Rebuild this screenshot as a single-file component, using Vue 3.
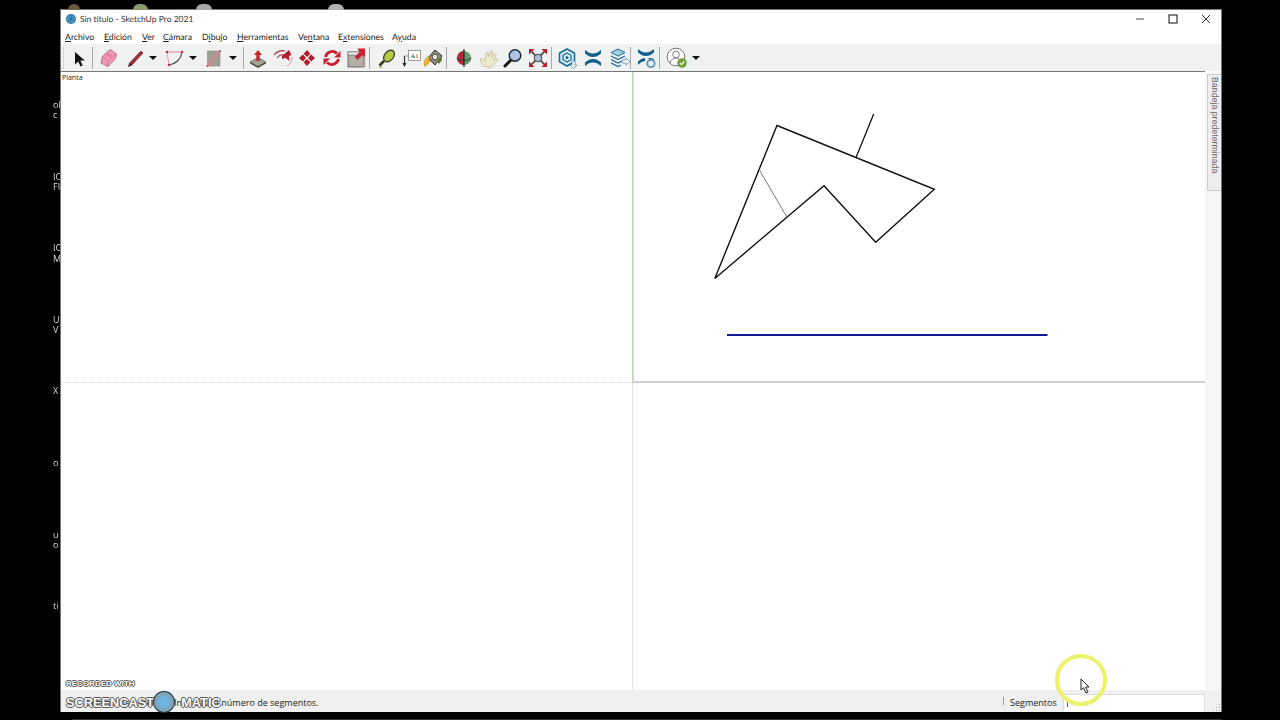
<template>
  <div class="stage">
    <!-- restos del escritorio detrás de la ventana -->
    <div class="desk-icon one"></div>
    <div class="desk-icon two"></div>
    <div class="desk-icon three"></div>
    <div class="desk-icon four"></div>
    <span v-for="l in deskLabels" :key="l.y" class="desk-label" :style="{ top: l.y + 'px' }">{{ l.t }}</span>

    <div class="window">
      <div class="titlebar">
        <svg class="app-logo" width="12" height="12" viewBox="0 0 12 12">
          <circle cx="6" cy="6" r="5" fill="#2f78a8" />
          <path d="M2 4l4-2.400L10 4v4l-4 2.400L2 8z" fill="#4d9bc8" />
          <path d="M6 1.600v8.800M2 4l8 4M10 4L2 8" stroke="#1d5a85" stroke-width=".6" />
        </svg>
        <span class="title">Sin título - SketchUp Pro 2021</span>
        <div class="win-btns">
          <div class="win-btn"><svg width="10" height="10" viewBox="0 0 10 10"><path d="M1 5h8" stroke="#666" stroke-width="1.200" /></svg></div>
          <div class="win-btn"><svg width="10" height="10" viewBox="0 0 10 10"><rect x="1" y="1" width="8" height="8" fill="none" stroke="#222" stroke-width="1.100" /></svg></div>
          <div class="win-btn"><svg width="10" height="10" viewBox="0 0 10 10"><path d="M1 1l8 8M9 1l-8 8" stroke="#333" stroke-width="1" /></svg></div>
        </div>
      </div>

      <div class="menubar">
        <span class="m1"><u>A</u>rchivo</span>
        <span class="m2"><u>E</u>dición</span>
        <span class="m3"><u>V</u>er</span>
        <span class="m4"><u>C</u>ámara</span>
        <span class="m5">D<u>i</u>bujo</span>
        <span class="m6"><u>H</u>erramientas</span>
        <span class="m7">Ve<u>n</u>tana</span>
        <span class="m8">E<u>x</u>tensiones</span>
        <span class="m9">A<u>y</u>uda</span>
      </div>

      <div class="toolbar">
        <div class="grip"></div>
        <div class="group first">
          <div class="btn"><svg viewBox="0 0 24 24"><path d="M8 6v12.500l3.200-3 2.300 5 2.200-1-2.300-5h4.400z" fill="#111" /></svg></div>
        </div>
        <div class="sep"></div>
        <div class="group draw">
          <div class="btn"><svg viewBox="0 0 24 24">
            <path d="M4 17l1.500-6.500 7.500-7 6.500 4.500-1 4.500-7.500 8z" fill="#f29ab8" stroke="#a85a78" stroke-width=".8" />
            <path d="M5.500 10.500l6 4.500 7-7M11.500 15L10 20.500" fill="none" stroke="#b86a88" stroke-width=".7" />
            <path d="M8.500 9l4.500 3 2-2.500L11 7z" fill="#e77da2" />
          </svg></div>
          <div class="btn pencil"><svg viewBox="0 0 24 24">
            <path d="M18 5l2 2L9 19l-3.500 1.500 1-3.500z" fill="#a32a3a" stroke="#57222a" stroke-width=".6" />
            <path d="M5.500 20.500l1-3.500 2.500 2z" fill="#333" />
          </svg></div>
          <div class="caret"></div>
          <div class="btn arc"><svg viewBox="0 0 24 24">
            <path d="M4 6h15" stroke="#e8809a" stroke-width="1" />
            <path d="M4 6l2 13" stroke="#e8a0b0" stroke-width="1" />
            <path d="M19 6c-1 7-6 12-13 13" fill="none" stroke="#444" stroke-width="1.100" />
            <circle cx="4" cy="6" r="1.300" fill="#c4304e" /><circle cx="19" cy="6" r="1.300" fill="#c4304e" /><circle cx="6" cy="19" r="1.300" fill="#c4304e" />
          </svg></div>
          <div class="caret"></div>
          <div class="btn rect"><svg viewBox="0 0 24 24">
            <rect x="5.500" y="5" width="12.500" height="15" fill="#a09e92" stroke="#8d8b80" stroke-width=".6" />
            <path d="M5.500 20L18 5" stroke="#e67f97" stroke-width="1.200" />
            <circle cx="5.500" cy="20" r="1" fill="#d0405c" /><circle cx="18" cy="5" r="1" fill="#d0405c" />
          </svg></div>
          <div class="caret last"></div>
        </div>
        <div class="sep wide"></div>
        <div class="group edit">
          <div class="btn"><svg viewBox="0 0 24 24">
            <path d="M4 16l8-4.500 8 4.500-8 4.500z" fill="#a3a193" stroke="#555" stroke-width=".7" />
            <path d="M4 16v1.500l8 4.500 8-4.500V16l-8 4.500z" fill="#4c4c46" />
            <path d="M12 4l4 5h-2.300v6h-3.400V9H8z" fill="#c1272d" />
          </svg></div>
          <div class="btn"><svg viewBox="0 0 24 24">
            <path d="M3 9c3-4 8-5 11-4M6 12c2-2.500 5-3.500 7-3" fill="none" stroke="#b0293a" stroke-width="1.100" />
            <path d="M11 10l7-6 2.500 5-2.500 1 .5 5-4-3-3.500 1z" fill="#b51f2e" />
            <path d="M16 20c3-2 5.500-5.500 5-9" fill="none" stroke="#e28c98" stroke-width="1" />
          </svg></div>
          <div class="btn"><svg viewBox="0 0 24 24">
            <path d="M12 4l3.400 3.800L12 11 8.600 7.800zM12 20l3.400-3.800L12 13l-3.400 3.200zM4 12l3.800-3.400L11 12l-3.200 3.400zM20 12l-3.800-3.400L13 12l3.200 3.400z" fill="#b01c2c" />
          </svg></div>
          <div class="btn"><svg viewBox="0 0 24 24">
            <path d="M5.500 11a6.800 6.800 0 0 1 11.500-3.500" fill="none" stroke="#c8202f" stroke-width="2.800" />
            <path d="M18.500 13a6.800 6.800 0 0 1-11.500 3.500" fill="none" stroke="#c8202f" stroke-width="2.800" />
            <path d="M20.500 5v6.500H14zM3.500 19v-6.500H10z" fill="#c8202f" />
          </svg></div>
          <div class="btn"><svg viewBox="0 0 24 24">
            <rect x="4" y="6" width="16" height="15" fill="#b2b0a2" stroke="#555" stroke-width=".8" />
            <path d="M4 6h16v3H4z" fill="#ececec" stroke="#555" stroke-width=".5" />
            <path d="M21 2.500v8.500l-2.500-2-5 5-3-3 5-5-2-3.500z" fill="#c8202f" />
            <path d="M21 11v10h-3" fill="none" stroke="#e59aa6" stroke-width=".8" />
          </svg></div>
        </div>
        <div class="sep"></div>
        <div class="group notes">
          <div class="btn"><svg viewBox="0 0 24 24">
            <path d="M9 15l-4.500 4.500" stroke="#2e3a1e" stroke-width="2.500" />
            <ellipse cx="14" cy="10" rx="4.500" ry="6.500" transform="rotate(40 14 10)" fill="#b5c84a" stroke="#3b4420" stroke-width="1.300" />
            <path d="M4 21h3" stroke="#c8a040" stroke-width="1.500" />
          </svg></div>
          <div class="btn"><svg viewBox="0 0 24 24">
            <rect x="9.500" y="4.500" width="12" height="10" fill="#fff" stroke="#777" stroke-width=".7" />
            <text x="15.500" y="12" text-anchor="middle" class="a1">A1</text>
            <path d="M5.500 10v9" stroke="#333" stroke-width="1.200" />
            <path d="M5.500 10h4" stroke="#777" stroke-width=".7" />
            <path d="M3.500 17h4l-2 4z" fill="#222" />
          </svg></div>
          <div class="btn paint"><svg viewBox="0 0 24 24">
            <path d="M7 12l7-8 7 6-7 9z" fill="#8d8d7e" stroke="#2f2f2f" stroke-width="1" />
            <circle cx="14" cy="11" r="2.800" fill="#e8e8dc" stroke="#333" stroke-width=".8" />
            <path d="M8 10C4 12 2 17 4 20.500c2-1 3-3 4.500-4.500z" fill="#f0b828" stroke="#99761a" stroke-width=".5" />
            <path d="M16 15l4-5 1 4-3 4z" fill="#5a7a32" />
          </svg></div>
        </div>
        <div class="sep"></div>
        <div class="group view">
          <div class="btn"><svg viewBox="0 0 24 24">
            <circle cx="12" cy="12" r="7" fill="#5f9e6a" />
            <path d="M12 5a7 7 0 0 0 0 14z" fill="#b5283a" />
            <path d="M4.500 12c2 3 13 3 15 0" fill="none" stroke="#3a3a3a" stroke-width="1" />
            <path d="M12 3v18" stroke="#222" stroke-width="1.200" />
          </svg></div>
          <div class="btn"><svg viewBox="0 0 24 24">
            <path d="M6 20l-3-7 2-1 3 3 1-8 2-.5.500 4 2-5.500 2 .5-1 6 3-4 2 1-3 6 3.500-2 1 1.500-5 5.500-3 2z" fill="#efe9cb" stroke="#bdb594" stroke-width=".7" />
          </svg></div>
          <div class="btn"><svg viewBox="0 0 24 24">
            <path d="M10 14l-6 6" stroke="#111" stroke-width="3" stroke-linecap="round" />
            <circle cx="14" cy="9.500" r="5.800" fill="#a9c5e2" stroke="#223" stroke-width="1.400" />
          </svg></div>
          <div class="btn"><svg viewBox="0 0 24 24">
            <path d="M5 5l14 14M19 5L5 19" stroke="#3a3a3a" stroke-width="1.600" />
            <circle cx="12" cy="12" r="3.800" fill="#a9bcd2" stroke="#444" stroke-width="1" />
            <path d="M3 3h5.500L3 8.500zM21 3v5.500L15.500 3zM21 21h-5.500l5.500-5.500zM3 21v-5.500L8.500 21z" fill="#b5202e" />
          </svg></div>
        </div>
        <div class="sep"></div>
        <div class="group teal">
          <div class="btn"><svg viewBox="0 0 24 24">
            <path d="M11 3l7.500 4.300v8.400L11 20l-7.500-4.300V7.300z" fill="#dcecf4" stroke="#1c6c96" stroke-width="1.600" />
            <path d="M11 7l4 2.300v4.400L11 16l-4-2.300V9.300z" fill="none" stroke="#1c6c96" stroke-width="1.300" />
            <circle cx="11" cy="11.500" r="1.500" fill="#1c6c96" />
            <path d="M16 15h3v4h2l-3.500 3.500L14 19h2z" fill="#fff" stroke="#5b93b2" stroke-width=".8" />
          </svg></div>
          <div class="btn"><svg viewBox="0 0 24 24">
            <path d="M4 4c3 2.500 5 3.500 8 3.500s5-1 8-3.500v3.500c-3 2.500-5 3.500-8 3.500S7 10 4 7.500z" fill="#125f8e" />
            <path d="M4 20c3-2.500 5-3.500 8-3.500s5 1 8 3.500v-3.500c-3-2.500-5-3.500-8-3.500s-5 1-8 3.500z" fill="#125f8e" />
          </svg></div>
          <div class="btn"><svg viewBox="0 0 24 24">
            <path d="M11 3l7 3.500-7 3.500-7-3.500z" fill="#a8d0e4" stroke="#1c6c96" stroke-width="1" />
            <path d="M4 10l7 3.500 7-3.500M4 13.500L11 17l4-2M4 17l7 3.500 3-1.500" fill="none" stroke="#1c6c96" stroke-width="1.300" />
            <path d="M15 14h4v-2l4 3.500-4 3.500v-2h-4z" fill="#fff" stroke="#5b93b2" stroke-width=".8" />
          </svg></div>
        </div>
        <div class="sep"></div>
        <div class="group manager">
          <div class="btn"><svg viewBox="0 0 24 24">
            <path d="M4 3c3 2.500 5 3.500 8 3.500s5-1 8-3.500v3.500c-3 2.500-5 3.500-8 3.500S7 9 4 6.500z" fill="#125f8e" />
            <path d="M4 19c2-2.500 4-3.500 7-3.800v-3.200c-3 .3-5 1.500-7 3.500z" fill="#125f8e" />
            <path d="M20 13v2.500c-1.500-1-3-2-5.500-2.500v-1c2 0 4 0 5.500 1z" fill="#125f8e" />
            <circle cx="17" cy="17.500" r="3.800" fill="#cfe2ee" stroke="#4f8db0" stroke-width="1.500" />
            <circle cx="17" cy="17.500" r="1.200" fill="#fff" />
          </svg></div>
        </div>
        <div class="sep"></div>
        <div class="group user">
          <div class="btn"><svg viewBox="0 0 24 24">
            <circle cx="11" cy="11" r="8.800" fill="#fff" stroke="#777" stroke-width="1" />
            <circle cx="11" cy="8.500" r="3.300" fill="#fff" stroke="#777" stroke-width="1" />
            <path d="M5 17c1-3.500 3.500-5 6-5s3 .5 3.500 1" fill="none" stroke="#777" stroke-width="1" />
            <circle cx="17" cy="17" r="4.800" fill="#6f9e3a" />
            <path d="M14.800 17l1.700 1.700 2.800-3.200" fill="none" stroke="#fff" stroke-width="1.200" />
          </svg></div>
          <div class="caret last"></div>
        </div>
      </div>
      <div class="rule"></div>

      <div class="main">
        <div class="viewports">
          <div class="vp top-left"><span class="vp-name">Planta</span></div>
          <div class="vp top-right">
            <svg class="drawing" viewBox="633 72 572 311">
              <path d="M777 125.500L934.300 189.300L875.700 242.300L824 185.700L714.800 278.500Z" fill="none" stroke="#111" stroke-width="1.400" stroke-linejoin="miter" />
              <path d="M856 157.500L873.700 114" stroke="#111" stroke-width="1.300" />
              <path d="M759 169.300L786.700 216.700" stroke="#777" stroke-width="1" />
              <path d="M727 335H1047.500" stroke="#0f1a96" stroke-width="2" />
            </svg>
          </div>
          <div class="vp bottom-left"></div>
          <div class="vp"></div>
        </div>
        <div class="tray">
          <div class="tray-tab"><span>Bandeja predeterminada</span></div>
        </div>
      </div>

      <div class="statusbar">
        <span class="status-msg">Seleccione el centro. Introduzca número de segmentos.</span>
        <div class="status-sep"></div>
        <span class="vcb-label">Segmentos</span>
        <div class="vcb"><span class="vcb-caret"></span></div>
        <svg class="resize" width="10" height="10" viewBox="0 0 10 10">
          <path d="M8 2h1v1H8zM5 5h1v1H5zM8 5h1v1H8zM2 8h1v1H2zM5 8h1v1H5zM8 8h1v1H8z" fill="#aaa" />
        </svg>
      </div>
    </div>
    <div class="desk-strip"></div>

    <!-- marca de agua y cursor por encima de la captura -->
    <div class="watermark">
      <div class="wm-small">RECORDED WITH</div>
      <div class="wm-big"><span>SCREENCAST</span><i class="wm-dot"></i><span>MATIC</span></div>
    </div>
    <div class="cursor-ring"></div>
    <svg class="cursor" width="12" height="16" viewBox="0 0 12 16">
      <path d="M1 1v11l2.500-2.300L6 15l2-1-2.400-5H9z" fill="#fff" stroke="#222" stroke-width="1" stroke-linejoin="round" />
    </svg>
  </div>
</template>

<script setup>
// Trozos de etiquetas del escritorio que asoman a la izquierda de la ventana
const deskLabels = [
  { y: 99, t: "ol" },
  { y: 109, t: "c" },
  { y: 171, t: "IC" },
  { y: 181, t: "FU" },
  { y: 242, t: "IC" },
  { y: 253, t: "M" },
  { y: 314, t: "U" },
  { y: 324, t: "V" },
  { y: 385, t: "X" },
  { y: 457, t: "o" },
  { y: 529, t: "u" },
  { y: 539, t: "o" },
  { y: 600, t: "ti" },
];
</script>

<style>
html,
body {
  margin: 0;
  background: #000;
  overflow: hidden;
}
</style>

<style scoped>
.stage {
  position: relative;
  width: 1280px;
  height: 720px;
  padding: 9px 58px 0 60px;
  box-sizing: border-box;
  background: #000;
  overflow: hidden;
  font-family: "Open Sans", "Noto Sans", sans-serif;
  color: #1c1c1c;
}

/* Escritorio */
.desk-icon {
  position: absolute;
  top: 4px;
  height: 6px;
  border-radius: 6px 6px 0 0;
}
.desk-icon.one { left: 68px; width: 12px; background: #6a5a40; }
.desk-icon.two { left: 133px; width: 15px; background: #8d9a70; }
.desk-icon.three { left: 196px; width: 16px; background: #a8a8a8; }
.desk-icon.four { left: 328px; width: 16px; background: #b0b0b0; }
.desk-label {
  position: absolute;
  left: 53px;
  width: 7px;
  overflow: hidden;
  font-size: 9px;
  line-height: 11px;
  color: #d8d8d8;
  will-change: transform;
  white-space: nowrap;
}
.desk-strip {
  height: 1px;
  margin: 7px 0 0 12px;
  background: #333;
}

/* Ventana */
.window {
  width: 1162px;
  height: 703px;
  box-sizing: border-box;
  border: 1px solid #7a7a7a;
  border-bottom: 0;
  background: #fff;
  display: flex;
  flex-direction: column;
}
.titlebar {
  height: 18px;
  flex: none;
  display: flex;
  align-items: center;
  padding-left: 4px;
}
.app-logo {
  margin-right: 3px;
}
.title {
  font-family: Lato, "Open Sans", sans-serif;
  font-size: 8.500px;
  text-rendering: geometricPrecision;
  color: #333;
}
.win-btns {
  margin-left: auto;
  margin-right: -1px;
  display: flex;
}
.win-btn {
  width: 33px;
  height: 18px;
  display: flex;
  align-items: center;
  justify-content: center;
}
.menubar {
  height: 16px;
  flex: none;
  display: flex;
  align-items: center;
  padding-left: 4px;
  font-family: Lato, "Open Sans", sans-serif;
  font-size: 8.700px;
  text-rendering: geometricPrecision;
  white-space: nowrap;
}
.m1 { width: 39px; }
.m2 { width: 38px; }
.m3 { width: 21px; }
.m4 { width: 39px; }
.m5 { width: 35px; }
.m6 { width: 61px; }
.m7 { width: 40px; }
.m8 { width: 54px; }

/* Barra de herramientas */
.toolbar {
  height: 27px;
  flex: none;
  background: #f0f1f1;
  display: flex;
  align-items: center;
}
.grip {
  width: 1px;
  height: 22px;
  margin-left: 2px;
  border-left: 1px dotted #bbb;
}
.group {
  display: flex;
  align-items: center;
}
.first { margin-left: 2px; }
.draw { margin-left: 2px; }
.pencil { margin-left: 2px; }
.arc { margin-left: 4px; }
.rect { margin-left: 3px; }
.caret.last { margin-left: 1px; }
.edit { gap: 0.5px; }
.notes { margin-left: 3px; }
.paint { margin-left: -2px; }
.view { margin-left: 3px; gap: 0.5px; }
.teal { margin-left: 2px; margin-right: -2px; gap: 1.500px; }
.manager { margin-left: 1px; }
.user { margin-left: 3px; }
.btn {
  flex: none;
  width: 24px;
  height: 24px;
}
.btn svg {
  display: block;
  width: 24px;
  height: 24px;
}
.caret {
  flex: none;
  width: 12px;
  height: 24px;
  position: relative;
}
.caret::after {
  content: "";
  position: absolute;
  left: 2px;
  top: 10px;
  border-left: 4px solid transparent;
  border-right: 4px solid transparent;
  border-top: 4px solid #111;
}
.sep {
  flex: none;
  width: 1px;
  height: 22px;
  margin: 0 2px 0 1px;
  background: #a8aaaa;
}
.sep.wide {
  margin-left: 4px;
}
.a1 {
  font-family: "Liberation Serif", serif;
  font-size: 6.500px;
  fill: #333;
}
.rule {
  height: 1px;
  flex: none;
  margin-right: 16px;
  background: #777;
}

/* Vistas */
.main {
  flex: 1;
  min-height: 0;
  display: flex;
}
.viewports {
  width: 1144px;
  display: grid;
  grid-template-columns: 572px 572px;
  grid-template-rows: 311px 307px;
}
.vp {
  position: relative;
  box-sizing: border-box;
  background: #fff;
}
.top-left {
  border-bottom: 1px dotted #d0d0d0;
}
.bottom-left {
  border-right: 1px dotted #d0d0d0;
}
.top-right {
  box-shadow: inset 1px 0 #c6dcc6, -1px 0 #c6dcc6, inset 0 -2px #d0d0d0;
}
.vp-name {
  position: absolute;
  left: 1px;
  top: 1px;
  font-size: 7px;
  line-height: 9px;
}
.drawing {
  display: block;
  width: 572px;
  height: 311px;
}
.tray {
  flex: 1;
  background: #f6f6f6;
  padding: 2px 0 0 2px;
}
.tray-tab {
  height: 117px;
  box-sizing: border-box;
  background: #eeeeee;
  border: 1px solid #cfcfcf;
  border-right: 0;
  display: flex;
  justify-content: center;
  padding-top: 2px;
}
.tray-tab span {
  writing-mode: vertical-rl;
  font-family: "Liberation Sans", sans-serif;
  font-size: 8.800px;
  line-height: 11px;
  color: #666;
  white-space: nowrap;
}

/* Barra de estado */
.statusbar {
  position: relative;
  height: 22px;
  flex: none;
  background: #f0f0f0;
  display: flex;
  align-items: center;
  font-size: 9px;
}
.status-msg {
  flex: 1;
  padding: 2px 0 0 25px;
  color: #222;
}
.status-sep {
  width: 1px;
  height: 8px;
  background: #999;
  margin-right: 6px;
}
.vcb-label {
  width: 53px;
  padding-top: 2px;
  color: #222;
}
.vcb {
  width: 142px;
  height: 18px;
  align-self: flex-end;
  box-sizing: border-box;
  background: #fff;
  border: 1px solid #dcdcdc;
  border-bottom: 0;
  margin-right: 16px;
  display: flex;
  align-items: center;
  padding-left: 3px;
}
.vcb-caret {
  width: 1px;
  height: 6px;
  background: #555;
}
.resize {
  position: absolute;
  right: 0;
  bottom: 0;
}

/* Watermark */
.watermark {
  position: absolute;
  left: 66px;
  top: 679px;
  font-family: "Liberation Sans", sans-serif;
  font-weight: 700;
  color: #fff;
  text-shadow: 1px 0 #555, -1px 0 #555, 0 1px #555, 0 -1px #555;
}
.wm-small {
  font-size: 8px;
  line-height: 10px;
}
.wm-big {
  display: flex;
  align-items: center;
  font-size: 12.800px;
  height: 24px;
  margin-top: 1px;
  width: 170px;
}
.wm-dot {
  flex: none;
  width: 12px;
  height: 12px;
  margin: 0 7px 0 0;
  border-radius: 50%;
  background: #6db4e6;
  border: 4px solid #7fa6b8;
  box-shadow: 0 0 0 1px #234;
}
.cursor-ring {
  position: absolute;
  left: 1055px;
  top: 654px;
  width: 44px;
  height: 44px;
  border: 4px solid #edf16c;
  border-radius: 50%;
}
.cursor {
  position: absolute;
  left: 1080px;
  top: 678px;
}
</style>
